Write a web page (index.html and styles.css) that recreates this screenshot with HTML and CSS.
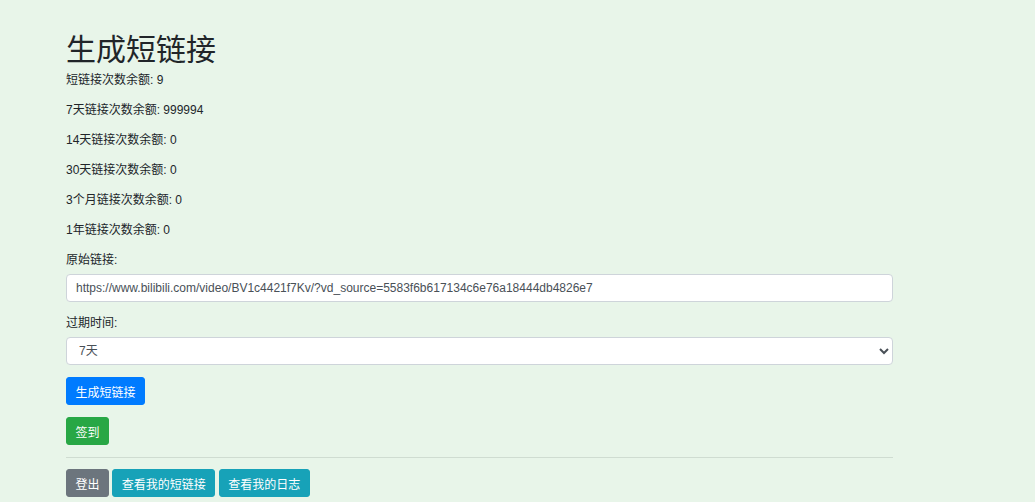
FILE: index.html
```html
<!DOCTYPE html>
<html lang="zh-CN">
<head>
  <meta charset="UTF-8">
  <meta name="viewport" content="width=device-width, initial-scale=1.0">
  <title>生成短链接</title>
  <link rel="stylesheet" href="styles.css">
</head>
<body>
  <div class="container">
    <h1>生成短链接</h1>
    <p>短链接次数余额: 9</p>
    <p>7天链接次数余额: 999994</p>
    <p>14天链接次数余额: 0</p>
    <p>30天链接次数余额: 0</p>
    <p>3个月链接次数余额: 0</p>
    <p>1年链接次数余额: 0</p>

    <form class="link-form">
      <div class="form-group">
        <label for="url">原始链接:</label>
        <input type="text" id="url" class="form-control" value="https://www.bilibili.com/video/BV1c4421f7Kv/?vd_source=5583f6b617134c6e76a18444db4826e7">
      </div>
      <div class="form-group">
        <label for="expire">过期时间:</label>
        <select id="expire" class="form-control">
          <option>7天</option>
          <option>14天</option>
          <option>30天</option>
          <option>3个月</option>
          <option>1年</option>
        </select>
      </div>
      <div class="row"><button type="button" class="btn btn-primary">生成短链接</button></div>
      <div class="row"><button type="button" class="btn btn-success">签到</button></div>
    </form>

    <hr>
    <div class="actions">
      <button class="btn btn-secondary">登出</button>
      <button class="btn btn-info">查看我的短链接</button>
      <button class="btn btn-info">查看我的日志</button>
    </div>
  </div>
</body>
</html>
```

FILE: styles.css
```css
body {
  margin: 0;
  background: #e8f5e9;
  color: #212529;
  font-family: "Liberation Sans", "Noto Sans CJK SC", sans-serif;
  font-size: 12px;
  line-height: 18px;
}

.container {
  width: 827px;
  padding: 0 0 0 66px;
}

h1 {
  font-size: 30px;
  font-weight: 400;
  line-height: 36px;
  margin: 32px 0 3px;
}

p {
  margin: 0 0 12px;
}

.form-group {
  margin-bottom: 12px;
}

label {
  display: block;
  margin-bottom: 5px;
}

.form-control {
  display: block;
  width: 100%;
  box-sizing: border-box;
  height: 28px;
  padding: 0 9px;
  font-family: inherit;
  font-size: 12px;
  color: #495057;
  background: #fff;
  border: 1px solid #ced4da;
  border-radius: 4px;
}

select.form-control {
  padding-left: 8px;
}

.row {
  margin-bottom: 12px;
}

.btn {
  height: 28px;
  padding: 0 8.5px;
  font-family: inherit;
  font-size: 12px;
  color: #fff;
  border: 1px solid transparent;
  border-radius: 3px;
  cursor: pointer;
}

.btn-primary { background: #007bff; border-color: #007bff; }
.btn-success { background: #28a745; border-color: #28a745; }
.btn-secondary { background: #6c757d; border-color: #6c757d; }
.btn-info { background: #17a2b8; border-color: #17a2b8; }

hr {
  margin: 0 0 11px;
  border: 0;
  border-top: 1px solid #cfdcd1;
}
```
